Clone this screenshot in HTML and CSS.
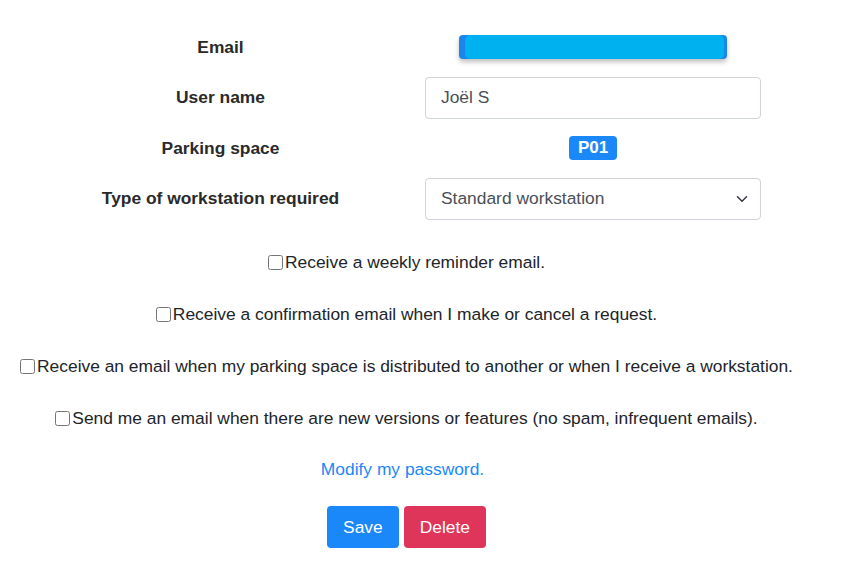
FILE: index.html
```html
<!DOCTYPE html>
<html>
<head>
<meta charset="utf-8">
<link rel="stylesheet" href="styles.css">
</head>
<body>
<div class="page">
  <div class="fields">
    <div class="label">Email</div>
    <div class="value"><div class="redact"><div class="redact-inner"></div></div></div>

    <div class="label">User name</div>
    <div class="value"><input class="control" type="text" value="Joël S"></div>

    <div class="label">Parking space</div>
    <div class="value"><span class="badge">P01</span></div>

    <div class="label">Type of workstation required</div>
    <div class="value">
      <div class="select">
        <span>Standard workstation</span>
        <svg class="chev" width="12" height="12" viewBox="0 0 16 16"><path d="M2 5l6 6 6-6" fill="none" stroke="#343a40" stroke-width="2" stroke-linecap="round" stroke-linejoin="round"/></svg>
      </div>
    </div>
  </div>

  <div class="checks">
    <label class="check"><input type="checkbox">Receive a weekly reminder email.</label>
    <label class="check"><input type="checkbox">Receive a confirmation email when I make or cancel a request.</label>
    <label class="check"><input type="checkbox">Receive an email when my parking space is distributed to another or when I receive a workstation.</label>
    <label class="check"><input type="checkbox">Send me an email when there are new versions or features (no spam, infrequent emails).</label>
  </div>

  <div class="link-row"><a class="link" href="#">Modify my password.</a></div>

  <div class="buttons">
    <button class="btn btn-save">Save</button>
    <button class="btn btn-delete">Delete</button>
  </div>
</div>
</body>
</html>
```

FILE: styles.css
```css
html, body {
  margin: 0;
  padding: 0;
  background: #ffffff;
}
body {
  font-family: "Liberation Sans", Arial, sans-serif;
  font-size: 17.4px;
  color: #212529;
  line-height: 1.5;
}
.page {
  width: 813px;
  padding-top: 26px;
}
.fields {
  display: grid;
  grid-template-columns: 409px 336px;
  grid-auto-rows: 42px;
  row-gap: 8.5px;
  padding-left: 16px;
}
.label {
  font-weight: bold;
  text-align: center;
  display: flex;
  align-items: center;
  justify-content: center;
  color: #2a2a2a;
}
.value {
  display: flex;
  align-items: center;
  justify-content: center;
}
.redact {
  width: 268px;
  height: 24px;
  background: #1a86ec;
  border-radius: 4px;
  box-shadow: 0 3px 5px rgba(0,0,0,0.25);
  position: relative;
}
.redact-inner {
  position: absolute;
  left: 6px;
  right: 3px;
  top: 0;
  bottom: 0;
  background: #00b1ef;
  border-radius: 5px;
}
.control {
  box-sizing: border-box;
  width: 336px;
  height: 42px;
  border: 1px solid #ced4da;
  border-radius: 4px;
  padding: 6px 15px;
  font-family: "Liberation Sans", Arial, sans-serif;
  font-size: 17.4px;
  color: #495057;
  outline: none;
}
.badge {
  display: inline-flex;
  align-items: center;
  justify-content: center;
  width: 48px;
  height: 24px;
  background: #1a88f8;
  color: #fff;
  font-weight: bold;
  font-size: 17px;
  border-radius: 4px;
}
.select {
  box-sizing: border-box;
  width: 336px;
  height: 42px;
  border: 1px solid #ced4da;
  border-radius: 4px;
  padding: 0 12px 0 15px;
  color: #495057;
  display: flex;
  align-items: center;
  justify-content: space-between;
}
.chev {
  display: block;
}
.checks {
  display: flex;
  flex-direction: column;
  align-items: center;
  margin-top: 30px;
  row-gap: 26px;
}
.check {
  display: flex;
  align-items: center;
  height: 26px;
  white-space: nowrap;
}
.check input {
  width: 15px;
  height: 15px;
  margin: 0 2px 0 0;
}
.link-row {
  text-align: center;
  margin-top: 24px;
  padding-right: 8px;
}
.link {
  color: #1a88f8;
  text-decoration: none;
}
.buttons {
  display: flex;
  justify-content: center;
  column-gap: 5px;
  margin-top: 24px;
}
.btn {
  font-family: "Liberation Sans", Arial, sans-serif;
  font-size: 17.4px;
  line-height: 24px;
  padding: 9px 16px;
  border: none;
  border-radius: 4px;
  color: #fff;
}
.btn-save {
  background: #1a88f8;
}
.btn-delete {
  background: #e0355a;
}
```
